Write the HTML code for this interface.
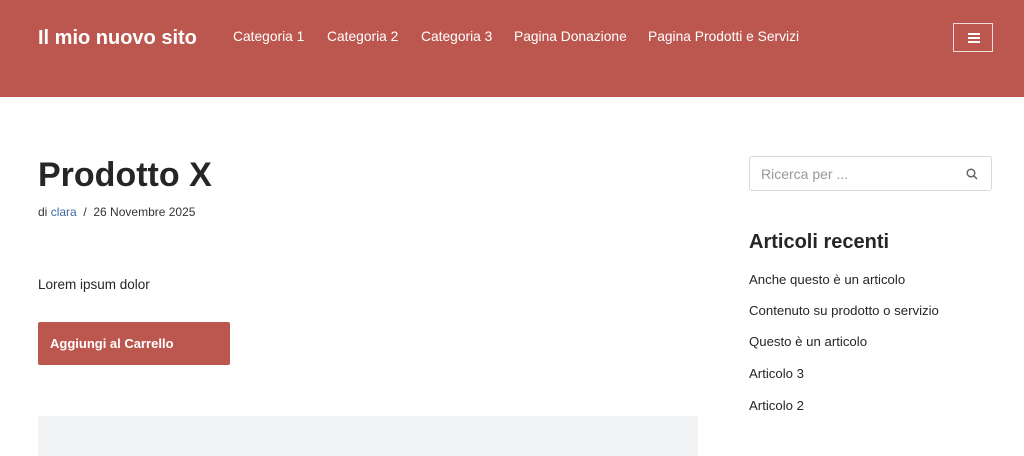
<!DOCTYPE html>
<html><head><meta charset="utf-8"><style>
*{margin:0;padding:0;box-sizing:border-box}
body{width:1024px;height:447px;overflow:hidden;background:#fff;font-family:"Liberation Sans",Arial,sans-serif;color:#272626;position:relative}
.hdr{position:absolute;left:0;top:0;width:1024px;height:97px;background:#bc574f}
.logo{position:absolute;left:38px;top:27px;color:#fff;font-weight:bold;font-size:20px}
.nav a{position:absolute;top:29px;color:#fff;font-size:13.8px;text-decoration:none;white-space:nowrap}
.burger{position:absolute;left:953px;top:23px;width:40px;height:29px;border:1px solid #f2dcda}
.burger i{position:absolute;left:14px;width:12px;height:2px;background:#fff}
h1{position:absolute;left:38px;top:156px;font-size:34px;font-weight:bold;color:#272626}
.meta{position:absolute;left:38px;top:205px;font-size:12px;color:#333}
.meta a{color:#3d6aa3;text-decoration:none}
.p{position:absolute;left:38px;top:277px;font-size:13.5px}
.btn{position:absolute;left:38px;top:322px;width:192px;height:43px;background:#bc574f;border-radius:2px;color:#fff;font-weight:bold;font-size:13px;padding:14px 0 0 12px}
.grey{position:absolute;left:38px;top:416px;width:660px;height:40px;background:#f3f4f6}
.search{position:absolute;left:749px;top:156px;width:243px;height:35px;border:1px solid #d9d9d9;border-radius:3px;font-size:14px;color:#999;padding:9px 0 0 11px}
.search svg{position:absolute;right:13px;top:11px}
h2{position:absolute;left:749px;top:231px;font-size:20px;font-weight:bold}
.rl{position:absolute;left:749px;font-size:13.2px;color:#272626}
</style></head><body>
<div class="hdr">
<div class="logo">Il mio nuovo sito</div>
<div class="nav">
<a style="left:233px">Categoria 1</a>
<a style="left:327px">Categoria 2</a>
<a style="left:421px">Categoria 3</a>
<a style="left:514px">Pagina Donazione</a>
<a style="left:648px">Pagina Prodotti e Servizi</a>
</div>
<div class="burger"><i style="top:9px"></i><i style="top:13px"></i><i style="top:17px"></i></div>
</div>
<h1>Prodotto X</h1>
<div class="meta">di <a>clara</a> &nbsp;/&nbsp; 26 Novembre 2025</div>
<div class="p">Lorem ipsum dolor</div>
<div class="btn">Aggiungi al Carrello</div>
<div class="grey"></div>
<div class="search">Ricerca per ...
<svg width="12" height="12" viewBox="0 0 12 12"><circle cx="5" cy="5" r="3.8" fill="none" stroke="#666" stroke-width="1.5"/><line x1="7.8" y1="7.8" x2="11" y2="11" stroke="#666" stroke-width="1.5"/></svg></div>
<h2>Articoli recenti</h2>
<div class="rl" style="top:272px">Anche questo è un articolo</div>
<div class="rl" style="top:303px">Contenuto su prodotto o servizio</div>
<div class="rl" style="top:334px">Questo è un articolo</div>
<div class="rl" style="top:366px">Articolo 3</div>
<div class="rl" style="top:398px">Articolo 2</div>
</body></html>
